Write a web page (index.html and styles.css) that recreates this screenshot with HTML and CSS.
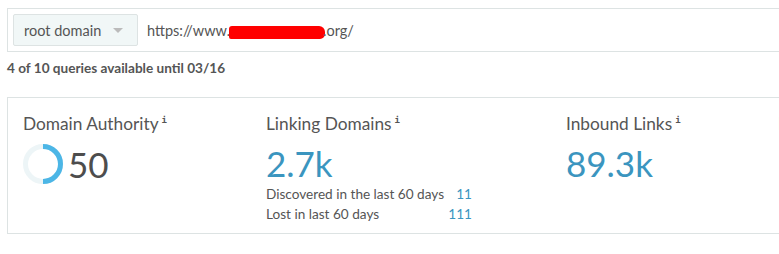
FILE: index.html
```html
<!DOCTYPE html>
<html lang="en">
<head>
  <meta charset="UTF-8">
  <title>Link Explorer</title>
  <link rel="stylesheet" href="styles.css">
</head>
<body>
  <div class="page">
    <!-- Search bar -->
    <div class="search">
      <div class="scope">
        <span>root domain</span>
        <span class="caret"></span>
      </div>
      <div class="url">https://www.<span class="redact"></span>.org/</div>
    </div>

    <p class="quota">4 of 10 queries available until 03/16</p>

    <!-- Metrics -->
    <div class="metrics">
      <div class="metric col-da">
        <div class="metric-title">Domain Authority<sup>i</sup></div>
        <div class="da-row">
          <svg class="ring" width="40" height="40" viewBox="0 0 40 40">
            <circle cx="20" cy="20" r="17.5" fill="none" stroke="#edf5f7" stroke-width="5"/>
            <path d="M20 2.5 A17.5 17.5 0 0 1 20 37.5" fill="none" stroke="#4cb6e6" stroke-width="5"/>
          </svg>
          <span class="big dark">50</span>
        </div>
      </div>

      <div class="metric col-ld">
        <div class="metric-title">Linking Domains<sup>i</sup></div>
        <div class="big">2.7k</div>
        <div class="sub-row"><span>Discovered in the last 60 days</span><span class="num">11</span></div>
        <div class="sub-row"><span>Lost in last 60 days</span><span class="num">111</span></div>
      </div>

      <div class="metric col-il">
        <div class="metric-title">Inbound Links<sup>i</sup></div>
        <div class="big">89.3k</div>
      </div>

      <div class="metric">
        <div class="metric-title">Ranking Keywords<sup>i</sup></div>
        <div class="big">6.1k</div>
      </div>
    </div>
  </div>
</body>
</html>
```

FILE: styles.css
```css
html, body {
  margin: 0;
  padding: 0;
  overflow: hidden;
  background: #fff;
}
body {
  font-family: Lato, "Open Sans", sans-serif;
  color: #555;
}
.page {
  padding: 8px 0 0 7px;
  width: 1100px;
}
.search {
  display: flex;
  align-items: center;
  border: 1px solid #dde3e3;
  padding: 5px;
  height: 32px;
}
.scope {
  display: flex;
  align-items: center;
  justify-content: space-between;
  box-sizing: border-box;
  width: 125px;
  height: 32px;
  padding: 0 14px 0 10px;
  background: #f1f7f7;
  border: 1px solid #dde3e3;
  border-radius: 2px;
  font-size: 14.5px;
}
.caret {
  width: 0;
  height: 0;
  border-left: 5px solid transparent;
  border-right: 5px solid transparent;
  border-top: 5px solid #bbb;
}
.url {
  margin-left: 9px;
  font-size: 14.5px;
}
.redact {
  display: inline-block;
  width: 96px;
  height: 13px;
  vertical-align: -3px;
  margin-left: -1px;
  margin-right: -2px;
  background: #ff0000;
  border-radius: 3px 6px 5px 2px;
}
.quota {
  margin: 8px 0 0;
  font-size: 13.6px;
  font-weight: bold;
  line-height: 16px;
}
.metrics {
  display: flex;
  margin-top: 21px;
  border: 1px solid #dde3e3;
  padding: 12px 15px 0;
  height: 123px;
}
.metric {
  flex: none;
}
.col-da { width: 243px; }
.col-ld { width: 300px; }
.col-il { width: 212px; }
.metric-title {
  font-size: 17.3px;
  line-height: 20px;
}
.metric-title sup {
  font-family: "DejaVu Sans Mono", monospace;
  font-weight: bold;
  font-size: 9px;
  margin-left: 3px;
  vertical-align: 7px;
}
.da-row {
  display: flex;
  align-items: center;
  margin-top: 9px;
}
.ring {
  margin-right: 5px;
}
.big {
  font-size: 35px;
  line-height: 42px;
  color: #3b95bf;
  margin-top: 8px;
}
.big.dark {
  color: #4d4d4d;
  margin-top: 0;
}
.sub-row {
  display: flex;
  justify-content: space-between;
  width: 206px;
  font-size: 13.6px;
  line-height: 20px;
}
.sub-row .num {
  color: #3b95bf;
}
```
